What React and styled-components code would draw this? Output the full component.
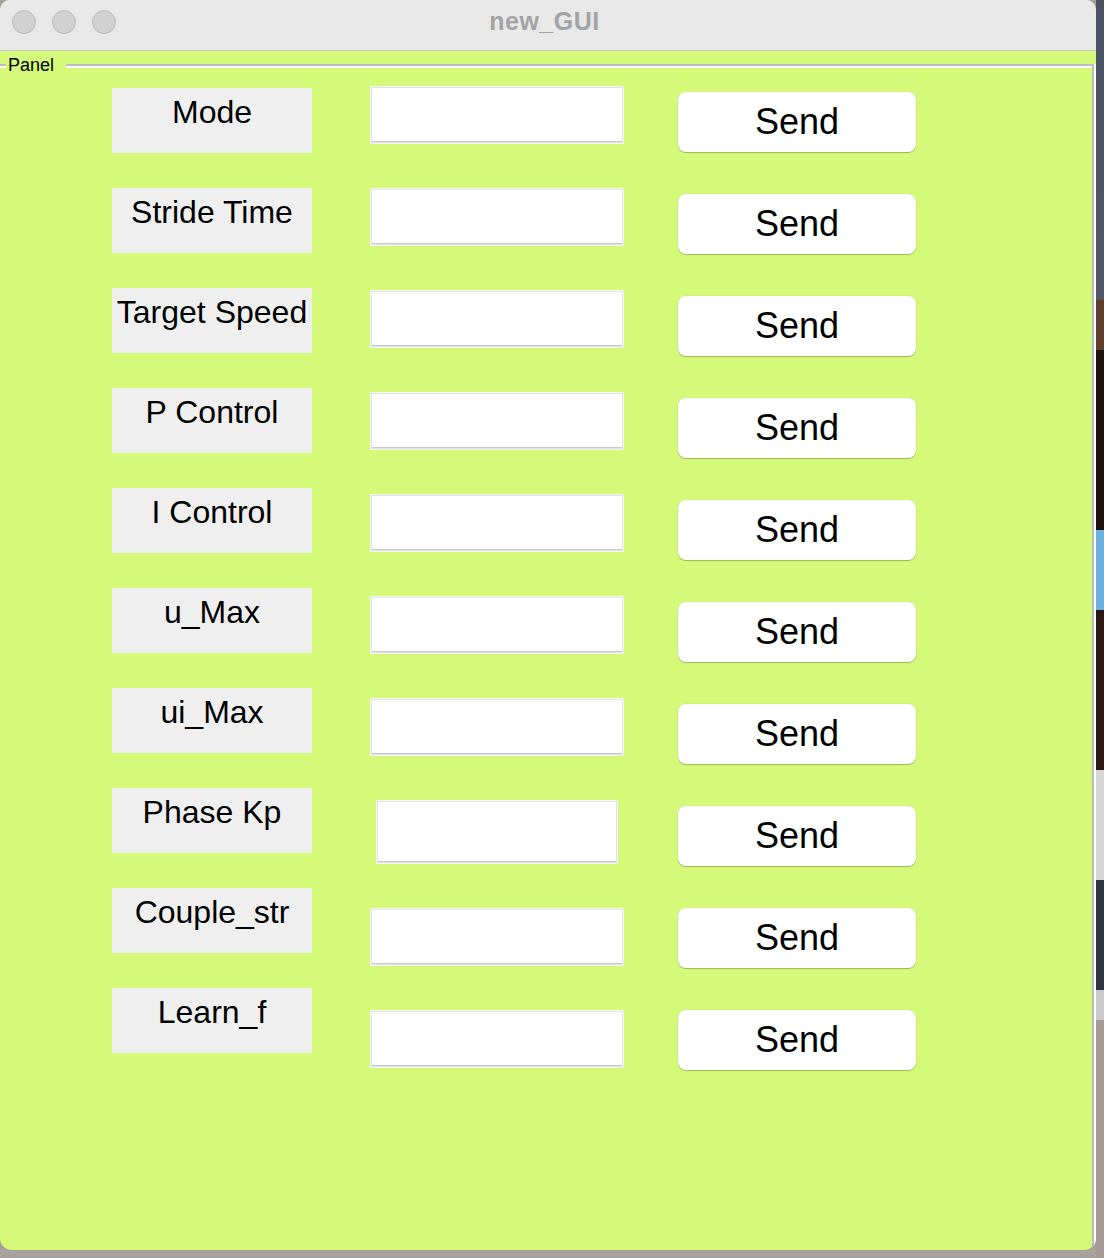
import React from "react";
import styled, { createGlobalStyle } from "styled-components";

const GlobalStyle = createGlobalStyle`
  body {
    margin: 0;
    background: #a7a19e;
    font-family: "Liberation Sans", Arial, sans-serif;
  }
`;

const fields = [
  "Mode",
  "Stride Time",
  "Target Speed",
  "P Control",
  "I Control",
  "u_Max",
  "ui_Max",
  "Phase Kp",
  "Couple_str",
  "Learn_f",
];

const Desktop = styled.div`
  width: 1104px;
  height: 1258px;
  overflow: hidden;
  background:
    linear-gradient(
        to bottom,
        #4a5162 0px,
        #525867 300px,
        #5e3e2a 300px,
        #5e3e2a 350px,
        #1c120f 350px,
        #1c120f 530px,
        #6cb0e0 530px,
        #6cb0e0 610px,
        #2a1a13 610px,
        #2a1a13 770px,
        #d5d5d5 770px,
        #d5d5d5 880px,
        #2f3440 880px,
        #2f3440 990px,
        #c9c9c9 990px,
        #c9c9c9 1020px,
        #a59d95 1020px
      )
      right top / 8px 100% no-repeat,
    #a7a19e;
`;

const Window = styled.div`
  width: 1096px;
  height: 1250px;
  display: flex;
  flex-direction: column;
  border-radius: 10px 10px 12px 12px;
  overflow: hidden;
  background: #d5fa7a;
`;

const TitleBar = styled.div`
  height: 50px;
  flex-shrink: 0;
  display: grid;
  grid-template-columns: 1fr auto 1fr;
  background: #e8e8e8;
  border-bottom: 1px solid #c9c9c9;
`;

const Lights = styled.div`
  display: flex;
  gap: 16px;
  padding: 10px 0 0 12px;
`;

const Light = styled.span`
  width: 22px;
  height: 22px;
  border-radius: 50%;
  background: #d1d1d1;
  border: 1px solid #bababa;
`;

const Title = styled.div`
  padding: 7px 7px 0 0;
  font-size: 25px;
  font-weight: bold;
  letter-spacing: 0.5px;
  color: #a3a3a3;
`;

const Panel = styled.div`
  position: relative;
  flex: 1;
  margin: 13px 2px 0 0;
  border-top: 2px solid #bcbcbc;
  border-right: 2px solid #bcbcbc;
  box-shadow: inset 0 2px 0 #fff, 2px 0 0 #fff;
`;

const Legend = styled.span`
  position: absolute;
  top: -11px;
  left: 6px;
  padding: 0 12px 0 2px;
  background: #d5fa7a;
  font-size: 18px;
  color: #000;
`;

const Columns = styled.div`
  display: flex;
  align-items: flex-start;
  padding-left: 112px;
`;

const Column = styled.div`
  display: flex;
  flex-direction: column;
  align-items: flex-start;
  margin-left: ${(p) => p.$offset || 0}px;
  padding-top: ${(p) => p.$top}px;
  gap: ${(p) => p.$gap}px;
`;

const Label = styled.div`
  width: 200px;
  height: 65px;
  box-sizing: border-box;
  padding-top: 6px;
  background: #efefef;
  text-align: center;
  font-size: 32px;
  color: #000;
  white-space: nowrap;
`;

const Field = styled.input`
  box-sizing: border-box;
  width: ${(p) => (p.$compact ? 242 : 254)}px;
  height: ${(p) => (p.$compact ? 64 : 58)}px;
  margin: 0 ${(p) => (p.$compact ? 6 : 0)}px;
  padding: 0 6px;
  background: #fff;
  border: 1px solid #f7f7f7;
  box-shadow: inset 0 0 0 1px #e3e3e3, inset 0 -2px 0 #c8c8c8;
  outline: none;
  font-family: inherit;
  font-size: 24px;
`;

const SendButton = styled.button`
  width: 238px;
  height: 60px;
  display: flex;
  align-items: center;
  justify-content: center;
  padding: 0;
  background: #fff;
  border: none;
  border-radius: 8px;
  box-shadow: 0 1px 1px rgba(0, 0, 0, 0.25), 0 0 0 0.5px rgba(0, 0, 0, 0.06);
  font-family: inherit;
  font-size: 36px;
  color: #000;
  cursor: pointer;
`;

export default function App() {
  return (
    <Desktop>
      <GlobalStyle />
      <Window>
        <TitleBar>
          <Lights>
            <Light />
            <Light />
            <Light />
          </Lights>
          <Title>new_GUI</Title>
          <div />
        </TitleBar>
        <Panel>
          <Legend>Panel</Legend>
          <Columns>
            <Column $top={22} $gap={35}>
              {fields.map((f) => (
                <Label key={f}>{f}</Label>
              ))}
            </Column>
            <Column $offset={58} $top={20} $gap={44}>
              {fields.map((f) => (
                <Field key={f} type="text" $compact={f === "Phase Kp"} />
              ))}
            </Column>
            <Column $offset={54} $top={26} $gap={42}>
              {fields.map((f) => (
                <SendButton key={f}>Send</SendButton>
              ))}
            </Column>
          </Columns>
        </Panel>
      </Window>
    </Desktop>
  );
}
